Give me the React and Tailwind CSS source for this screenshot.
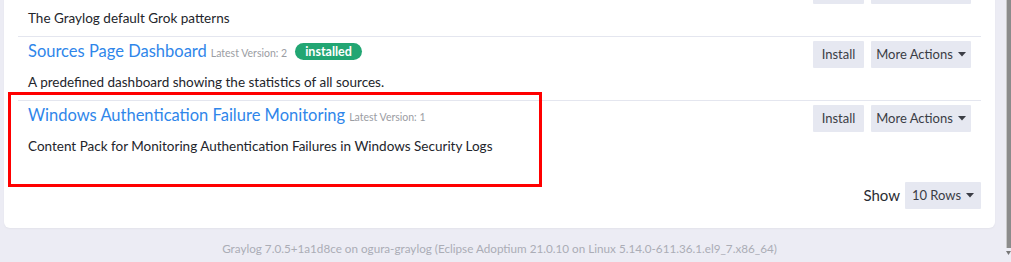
import React from "react";

function Caret() {
  return (
    <svg width="8" height="5" viewBox="0 0 8 5" className="ml-[5px] inline-block">
      <path d="M0 0 L8 0 L4 4.5 Z" fill="currentColor" />
    </svg>
  );
}

function Btn({ children, className = "" }) {
  return (
    <div
      className={
        "h-[27px] flex items-center justify-center bg-[#e6e8f1] text-[#3b3d45] text-[13px] rounded-[1px] " +
        className
      }
    >
      {children}
    </div>
  );
}

function Row({ title, version, installed, desc, first }) {
  return (
    <div className={(first ? "" : "border-t border-[#e4e6ef] ") + "pt-[4px] pb-[8px] px-[10px]"}>
      <div className="flex justify-between items-start">
        <div className="flex flex-col">
          <div className="h-[20px] flex items-baseline">
            <span className="text-[16.5px] leading-[20px] text-[#2f86ea]">{title}</span>
            <span className="ml-[4px] text-[10.5px] text-[#9b9da3]">Latest Version: {version}</span>
            {installed && (
              <span className="ml-[8px] self-center h-[17px] px-[10px] rounded-full bg-[#22a673] text-white text-[12.5px] font-bold leading-[17px]">
                installed
              </span>
            )}
          </div>
          <div className="mt-[11px] text-[13.5px] leading-[20px] text-[#23252b]">{desc}</div>
        </div>
        <div className="flex gap-[7px]">
          <Btn className="w-[51px]">Install</Btn>
          <Btn className="w-[100px]">
            More Actions
            <Caret />
          </Btn>
        </div>
      </div>
    </div>
  );
}

export default function App() {
  return (
    <div
      className="relative w-[1011px] h-[262px] overflow-hidden bg-[#ececf4] flex"
      style={{ fontFamily: "Lato, 'Noto Sans', sans-serif" }}
    >
      <div className="flex-1 flex flex-col pl-[4px] pr-[11px]">
        <div className="-mt-[27px] bg-white rounded-b-[6px] px-[14px] pb-[19px] shadow-[0_1px_2px_rgba(0,0,0,0.04)]">
          <Row
            first
            title="Graylog Grok Patterns"
            version="1"
            desc="The Graylog default Grok patterns"
          />
          <Row
            title="Sources Page Dashboard"
            version="2"
            installed
            desc="A predefined dashboard showing the statistics of all sources."
          />
          <Row
            title="Windows Authentication Failure Monitoring"
            version="1"
            desc="Content Pack for Monitoring Authentication Failures in Windows Security Logs"
          />
          <div className="mt-[18px] flex justify-end items-center">
            <span className="text-[15px] text-[#2a2c33] mr-[5px]">Show</span>
            <Btn className="w-[76px]">
              10 Rows
              <Caret />
            </Btn>
          </div>
        </div>
        <div className="mt-[11px] text-center text-[11.7px] leading-[18px] text-[#abadb6]">
          Graylog 7.0.5+1a1d8ce on ogura-graylog (Eclipse Adoptium 21.0.10 on Linux 5.14.0-611.36.1.el9_7.x86_64)
        </div>
      </div>
      <div className="w-[5px] flex flex-col">
        <div className="h-[248px] bg-[#8b8b8b] border-l border-[#c8c8c8]" />
        <div className="flex justify-center mt-[3px]">
          <svg width="5" height="5" viewBox="0 0 5 5">
            <path d="M0 0 L5 0 L2.5 4 Z" fill="#777" />
          </svg>
        </div>
      </div>
      <div className="absolute left-[8px] top-[92px] w-[534px] h-[95px] border-[3px] border-[#ff0000]" />
    </div>
  );
}
